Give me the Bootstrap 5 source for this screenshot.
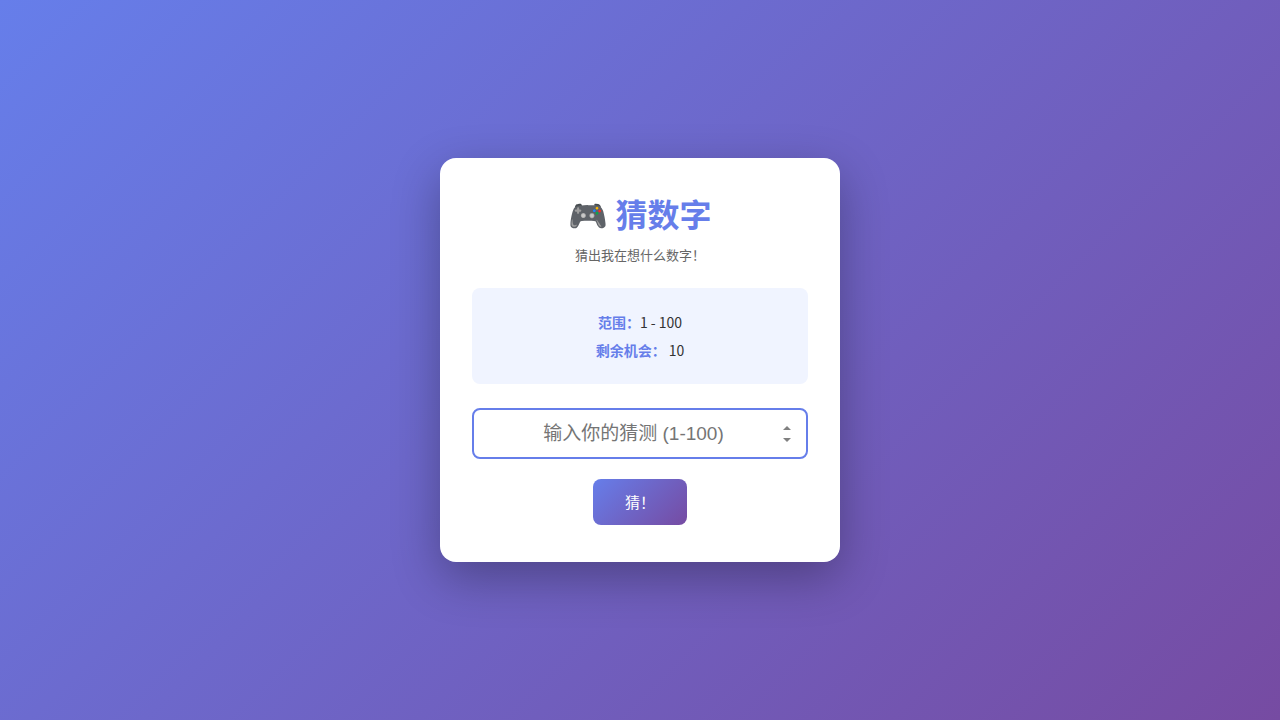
<!DOCTYPE html>
<html lang="zh-CN">
<head>
<meta charset="utf-8">
<meta name="viewport" content="width=device-width, initial-scale=1">
<title>猜数字</title>
<link rel="stylesheet" href="https://cdn.jsdelivr.net/npm/bootstrap@5.3.0/dist/css/bootstrap.min.css">
<style>
body{font-family:"Noto Sans CJK SC",sans-serif;background:linear-gradient(135deg,#667eea 0%,#764ba2 100%);color:#333}
.game-box{max-width:400px;border-radius:16px;padding:32px 32px 37px;box-shadow:0 16px 48px rgba(0,0,0,.3)}
.game-title{font-size:32px;line-height:47px;color:#667eea}
.game-sub{font-size:13px;line-height:19px;color:#666}
.info-box{background:#f0f4ff;border-radius:8px;font-size:14px;line-height:20px}
.info-box strong{color:#667eea}
.guess-input{border:2px solid #667eea;border-radius:8px;outline:0;font-family:"Liberation Sans","Noto Sans CJK SC",sans-serif;font-size:19px;line-height:47px;height:51px;padding:0 11px 0 14px;margin-bottom:20px}
.guess-input::placeholder{color:#757575;line-height:47px}
.guess-input::-webkit-inner-spin-button{-webkit-appearance:none;opacity:1;width:16px;height:24px;background:url("data:image/svg+xml,%3Csvg xmlns='http://www.w3.org/2000/svg' viewBox='0 0 16 24'%3E%3Cpath d='M4 8L8 4 12 8zM4 16L8 20 12 16z' fill='%23808080'/%3E%3C/svg%3E") center/16px 24px no-repeat}
.guess-btn{background:linear-gradient(135deg,#667eea 0%,#764ba2 100%);border-radius:8px;padding:12px 32px;font-size:15px;line-height:22px;color:#fff}
</style>
</head>
<body class="min-vh-100 d-flex align-items-center justify-content-center">
<main class="game-box bg-white w-100 text-center">
<h1 class="game-title fw-bold mb-2">🎮 猜数字</h1>
<p class="game-sub mb-4">猜出我在想什么数字！</p>
<section class="info-box p-4 mb-4">
<p class="mb-2"><strong>范围：</strong>1 - 100</p>
<p class="mb-0"><strong>剩余机会：</strong> <span>10</span></p>
</section>
<form>
<input class="guess-input w-100 d-block text-center" id="guess" type="number" min="1" max="100" aria-label="输入你的猜测 (1-100)" placeholder="输入你的猜测 (1-100)">
<button class="guess-btn border-0 d-block mx-auto" type="button">猜！</button>
</form>
</main>
<script src="https://cdn.jsdelivr.net/npm/bootstrap@5.3.0/dist/js/bootstrap.bundle.min.js"></script>
</body>
</html>
